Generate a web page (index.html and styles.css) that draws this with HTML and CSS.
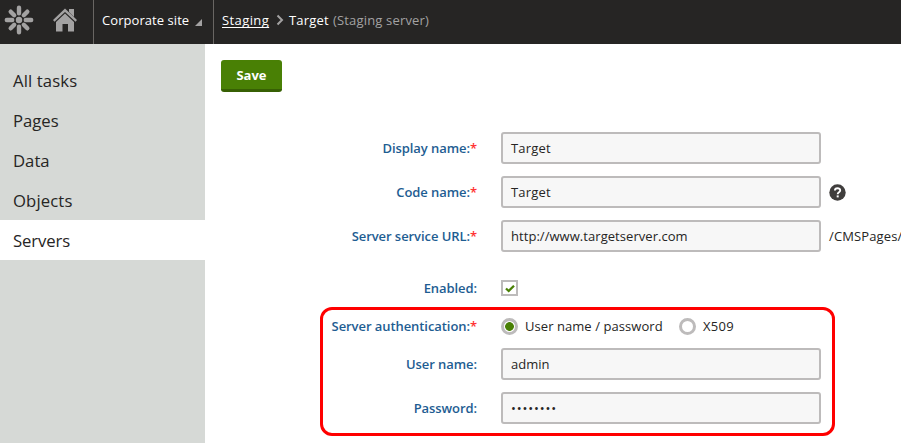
FILE: index.html
```html
<!DOCTYPE html>
<html lang="en">
<head>
<meta charset="utf-8">
<title>Staging server</title>
<link rel="stylesheet" href="styles.css">
</head>
<body>
<header class="topbar">
  <svg class="logo" width="30" height="30" viewBox="0 0 30 30">
    <g stroke="#a3a2a2" stroke-width="4.4" stroke-linecap="round">
      <path d="M15 2.800v5.400M15 21.800v5.400M2.800 15h5.400M21.800 15h5.400M6.700 6.700l3.500 3.500M19.800 19.800l3.500 3.500M6.700 23.300l3.500-3.500M19.800 10.200l3.500-3.500"/>
    </g>
    <circle cx="15" cy="15" r="3.200" fill="#a3a2a2"/>
  </svg>
  <svg class="home" width="24" height="24" viewBox="0 0 24 24" fill="#a3a2a2">
    <path d="M16 1h5v8l-5-5z"/>
    <path d="M12 .5 24 12l-1.500 1.800L12 3.900 1.500 13.800 0 12z"/>
    <path d="M12 5.500 21 14v9.500h-6V16H9.500v7.500H3V14z"/>
  </svg>
  <div class="site"><span class="site-name">Corporate site</span><i class="corner"></i></div>
  <nav class="crumbs">
    <a class="crumb-link" href="#">Staging</a>
    <svg class="chevron" width="8" height="12" viewBox="0 0 8 12"><path d="M1.500 1.500 6 6l-4.500 4.500" fill="none" stroke="#a3a2a2" stroke-width="2"/></svg>
    <span class="crumb-current">Target</span>
    <span class="crumb-type">(Staging server)</span>
  </nav>
</header>
<div class="body">
  <nav class="sidebar">
    <a class="item tasks">All tasks</a>
    <a class="item">Pages</a>
    <a class="item">Data</a>
    <a class="item objects">Objects</a>
    <a class="item active">Servers</a>
  </nav>
  <main class="content">
    <button class="save">Save</button>
    <div class="form">
      <div class="row"><label class="label">Display name:<b>*</b></label><div class="field target">Target</div></div>
      <div class="row"><label class="label">Code name:<b>*</b></label><div class="field target">Target</div>
        <svg class="help" width="17" height="17" viewBox="0 0 17 17"><circle cx="8.500" cy="8.500" r="8.200" fill="#403e3d"/><path d="M5.900 6.600C5.900 3.400 11.300 3.400 11.200 6.500c0 1.900-2.500 1.700-2.500 3.700" fill="none" stroke="#fff" stroke-width="1.900"/><path d="M7.700 11.400h2v2h-2z" fill="#fff"/></svg>
      </div>
      <div class="row"><label class="label">Server service URL:<b>*</b></label><div class="field url">http://www.targetserver.com</div><span class="suffix">/CMSPages/</span></div>
      <div class="row short enabled"><label class="label">Enabled:</label>
        <span class="check"><svg width="10" height="9" viewBox="0 0 10 9"><path d="M1 4.500 3.700 7 9 1.800" fill="none" stroke="#498005" stroke-width="2.300"/></svg></span>
      </div>
      <section class="auth">
        <div class="row short"><label class="label">Server authentication:<b>*</b></label>
          <span class="radio on"></span><span class="choice first">User name / password</span>
          <span class="radio"></span><span class="choice x509">X509</span>
        </div>
        <div class="row"><label class="label">User name:</label><div class="field">admin</div></div>
        <div class="row"><label class="label">Password:</label><div class="field secret">••••••••</div></div>
      </section>
    </div>
  </main>
</div>
</body>
</html>
```
FILE: styles.css
```css
* { box-sizing: border-box; }
body {
  margin: 0;
  height: 443px;
  overflow: hidden;
  background: #fff;
  color: #262524;
  font: 13px/20px "Open Sans", sans-serif;
}
.topbar {
  display: flex;
  align-items: center;
  height: 44px;
  padding-bottom: 4px;
  background: #262524;
  color: #fff;
}
.logo { flex: none; margin-left: 4px; }
.home { flex: none; margin-left: 19px; }
.site {
  display: flex;
  align-items: center;
  width: 121px;
  height: 44px;
  margin: 4px 0 0 16px;
  padding: 0 0 4px 8px;
  border: solid #696663;
  border-width: 0 1px;
}
.site-name { width: 93px; white-space: nowrap; letter-spacing: .06px; }
.corner {
  width: 0;
  height: 0;
  margin-top: 4px;
  border-left: 7px solid transparent;
  border-bottom: 7px solid #a3a2a2;
}
.crumbs { display: flex; align-items: center; white-space: nowrap; }
.crumb-link {
  width: 47px;
  margin-left: 8px;
  color: #fff;
  letter-spacing: .4px;
  text-underline-offset: 2px;
  text-decoration-skip-ink: none;
}
.chevron { margin: 0 5px 0 7px; }
.crumb-current { width: 40px; letter-spacing: .2px; }
.crumb-type { margin-left: 4px; color: #a3a2a2; letter-spacing: .17px; }
.body { display: flex; height: 399px; }
.sidebar { flex: none; width: 205px; padding-top: 16px; background: #d6d9d6; }
.item {
  display: block;
  height: 40px;
  padding: 1px 13px 0;
  font-size: 16.7px;
  line-height: 40px;
}
.item.tasks, .item.objects { letter-spacing: .12px; }
.item.active { background: #fff; letter-spacing: -.1px; }
.content { flex: 1; min-width: 0; padding: 16px 0 0 16px; }
.save {
  display: block;
  width: 61px;
  height: 32px;
  padding: 1px 0 0;
  border: 0;
  border-bottom: 3px solid #376004;
  border-radius: 3px;
  background: #498005;
  color: #fff;
  font: 700 13px/20px "Open Sans", sans-serif;
}
.form { padding-top: 40px; }
.row { display: flex; align-items: center; height: 32px; margin-bottom: 12px; white-space: nowrap; }
.row.short { height: 20px; }
.row.enabled { margin-top: 26px; margin-bottom: 9px; }
.label {
  display: flex;
  justify-content: flex-end;
  flex: none;
  width: 256px;
  margin-right: 24px;
  color: #1e5d92;
  font-weight: 600;
  letter-spacing: -.07px;
}
.label b { color: #f33; font-weight: 600; }
.field {
  flex: none;
  width: 320px;
  height: 32px;
  padding: 0 8px;
  border: 2px solid #bdbbbb;
  border-radius: 3px;
  background: #f7f7f7;
  line-height: 28px;
}
.target { letter-spacing: .2px; }
.url { letter-spacing: .05px; }
.secret { letter-spacing: .85px; }
.help, .suffix { flex: none; margin-left: 8px; }
.suffix { letter-spacing: .12px; }
.check, .radio { flex: none; width: 16px; height: 16px; border: 2px solid #bdbbbb; }
.check { display: flex; align-items: center; justify-content: center; width: 17px; }
.radio { width: 17px; height: 17px; border-width: 3px; border-radius: 50%; }
.radio.on { background: radial-gradient(circle, #498005 4px, #fff 4.700px); }
.choice { margin-left: 7px; }
.choice.first { width: 154px; letter-spacing: .06px; }
.x509 { letter-spacing: .3px; }
.auth {
  width: 515px;
  height: 129px;
  margin-left: 99px;
  padding-top: 6px;
  border: 3px solid #f00;
  border-radius: 12px;
}
.auth .label { width: 154px; }
```
